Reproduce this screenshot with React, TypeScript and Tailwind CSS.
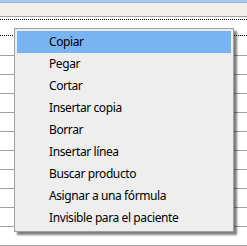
import React from 'react';

const items = [
  'Copiar',
  'Pegar',
  'Cortar',
  'Insertar copia',
  'Borrar',
  'Insertar línea',
  'Buscar producto',
  'Asignar a una fórmula',
  'Invisible para el paciente',
];

export default function App() {
  return (
    <div className="relative w-[247px] h-[246px] overflow-hidden bg-white" style={{ fontFamily: '"Noto Sans", "Open Sans", sans-serif' }}>
      {/* Grid header */}
      <div className="h-[3px] bg-[#a8cdf0] border-b border-[#8fb6dc]" />
      <div className="h-[14px] bg-[#f1f0ea] border-b border-[#a0a0a0]" />

      {/* Focused row */}
      <div className="pt-[2px] pb-px">
        <div className="h-[17px] border-y border-dotted border-black" />
      </div>

      {/* Rows */}
      {Array.from({ length: 11 }).map((_, i) => (
        <div key={i} className="h-[19px] border-b border-[#a0a0a0]" />
      ))}

      {/* Context menu */}
      <div className="absolute left-[14px] top-[28px] w-[220px] border border-[#a0a0a0] bg-[#eeeeee] p-[2px] shadow-[3px_3px_2px_rgba(0,0,0,0.5)]">
        {items.map((label, i) => (
          <div
            key={label}
            className={`h-[22px] flex items-center pl-[32px] text-[12px] tracking-[-0.4px] text-black ${i === 0 ? 'bg-[#77b4f1]' : ''}`}
          >
            {label}
          </div>
        ))}
      </div>
    </div>
  );
}
